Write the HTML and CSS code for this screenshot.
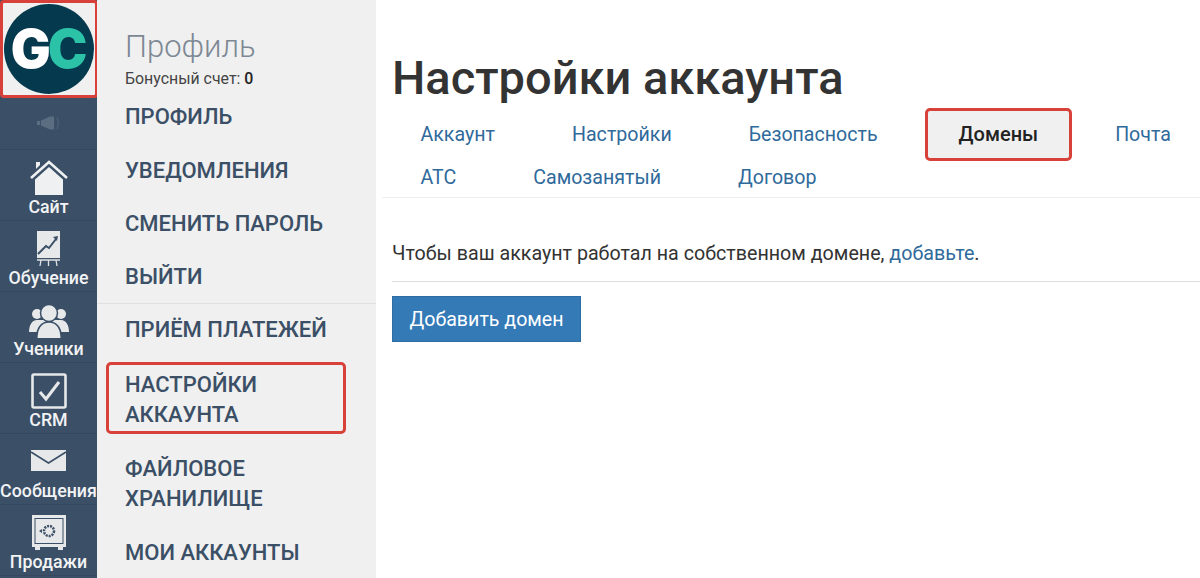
FILE: index.html
```html
<!DOCTYPE html>
<html lang="ru">
<head>
<meta charset="utf-8">
<title>Настройки аккаунта</title>
<link rel="stylesheet" href="styles.css">
</head>
<body>
<div class="app">
  <nav class="rail">
    <a class="logo-cell">
      <span class="logo"><span class="logo-g">G</span><span class="logo-c">C</span></span>
    </a>
    <div class="speaker">
      <svg width="26" height="18" viewBox="0 0 26 18"><path fill="#5b6d81" d="M1 7h3v4H1zM5 6.500 14 2.500h4v13h-4L5 11.500z"/><path fill="none" stroke="#4d5f74" stroke-width="1.500" d="M21 3c1.500 3.500 1.500 8.500 0 12"/></svg>
    </div>
    <a class="rail-item">
      <svg class="ico" width="38" height="36" viewBox="0 0 38 36"><path fill="#eef0f2" d="M6 2h4v3L6 9z"/><path fill="none" stroke="#eef0f2" stroke-width="2.600" d="M1 18 19 2l18 16"/><path fill="#eef0f2" d="M19 7 33 19.500V35H5V19.500z"/></svg>
      <span>Сайт</span>
    </a>
    <a class="rail-item">
      <svg class="ico" width="24" height="36" viewBox="0 0 24 36"><path fill="#e6e8ea" d="M0 0h23v27H0z"/><path fill="none" stroke="#3b4f66" stroke-width="2" d="m1 23 8-8 3 2 7-9"/><path fill="#3b4f66" d="m21 5-5 1 4 4z"/><path fill="none" stroke="#dfe2e5" stroke-width="1.300" d="M0 29h23M3 35l1-6M11.500 35v-6M20 35l-1-6"/></svg>
      <span>Обучение</span>
    </a>
    <a class="rail-item">
      <svg class="ico" width="40" height="34" viewBox="0 0 40 34"><g fill="#e6e8ea"><circle cx="8" cy="10" r="5"/><circle cx="32" cy="10" r="5"/><path d="M0 28c0-7 3-12 8-12h24c5 0 8 5 8 12z"/><g stroke="#3b4f66" stroke-width="1.500"><circle cx="20" cy="9" r="8.500"/><path d="M8 35c-1-10 4-17 12-17s13 7 12 17z"/></g></g></svg>
      <span>Ученики</span>
    </a>
    <a class="rail-item">
      <svg class="ico crm" width="36" height="36" viewBox="0 0 36 36"><rect x="1.500" y="1.500" width="33" height="33" rx="1.500" fill="none" stroke="#e6e8ea" stroke-width="2.600"/><path fill="none" stroke="#e6e8ea" stroke-width="3" d="m9 19 6 7 13-17"/></svg>
      <span>CRM</span>
    </a>
    <a class="rail-item">
      <svg class="ico mail" width="35" height="21" viewBox="0 0 35 21"><rect width="35" height="21" fill="#e6e8ea"/><path fill="none" stroke="#3b4f66" stroke-width="1.600" d="m0 2 17.500 11L35 2"/></svg>
      <span>Сообщения</span>
    </a>
    <a class="rail-item">
      <svg class="ico safe" width="36" height="36" viewBox="0 0 36 36"><path fill="#e6e8ea" d="M1 0h34v32h-3v3h-5v-3H9v3H4v-3H1z"/><rect x="4" y="3.500" width="28" height="25" fill="none" stroke="#3b4f66" stroke-width="1"/><circle cx="18" cy="16" r="5" fill="none" stroke="#3b4f66" stroke-width="2.500" stroke-dasharray="2 1"/><path fill="#3b4f66" d="m8 16 3-2v4z"/></svg>
      <span>Продажи</span>
    </a>
  </nav>

  <aside class="panel">
    <header class="panel-head">
      <h2 class="panel-title">Профиль</h2>
      <p class="bonus">Бонусный счет: <b>0</b></p>
    </header>
    <ul class="menu">
      <li class="menu-first"><a>ПРОФИЛЬ</a></li>
      <li><a>УВЕДОМЛЕНИЯ</a></li>
      <li><a>СМЕНИТЬ ПАРОЛЬ</a></li>
      <li class="menu-last"><a>ВЫЙТИ</a></li>
      <li class="menu-pay"><a>ПРИЁМ ПЛАТЕЖЕЙ</a></li>
      <li class="menu-tall menu-marked"><a>НАСТРОЙКИ АККАУНТА</a></li>
      <li class="menu-tall menu-files"><a>ФАЙЛОВОЕ ХРАНИЛИЩЕ</a></li>
      <li><a>МОИ АККАУНТЫ</a></li>
    </ul>
  </aside>

  <main class="main">
    <h1 class="title">Настройки аккаунта</h1>
    <ul class="tabs">
      <li><a>Аккаунт</a></li>
      <li><a>Настройки</a></li>
      <li><a>Безопасность</a></li>
      <li class="tab-active"><a>Домены</a></li>
      <li><a>Почта</a></li>
      <li><a>АТС</a></li>
      <li><a>Самозанятый</a></li>
      <li><a>Договор</a></li>
    </ul>
    <p class="note">Чтобы ваш аккаунт работал на собственном домене, <a>добавьте</a>.</p>
    <hr class="rule">
    <button class="btn" type="button">Добавить домен</button>
  </main>
</div>
</body>
</html>
```
FILE: styles.css
```css
* { box-sizing: border-box; }
html, body { margin: 0; padding: 0; height: 100%; overflow: hidden; background: #fff; }
body { font-family: Roboto, "Noto Sans", sans-serif; }
ul { list-style: none; margin: 0; padding: 0; }

.app { display: flex; height: 578px; overflow: hidden; }

/* Left rail */
.rail { width: 97px; flex: none; background: #3b4f66; display: flex; flex-direction: column; overflow: hidden; }
.logo-cell { flex: none; height: 98px; background: #f0f0f0; border: 3px solid #d8413a; border-radius: 4px; display: flex; align-items: center; justify-content: center; width: 98px; }
.logo { width: 90px; height: 90px; border-radius: 50%; background: #053a4e; display: flex; align-items: center; justify-content: center; font-family: Inter, sans-serif; font-weight: 900; font-size: 53px; letter-spacing: -3px; line-height: 1; padding-right: 3px; }
.logo-g { color: #fff; }
.logo-c { color: #2cc2a8; }
.speaker { height: 52px; flex: none; display: flex; align-items: center; justify-content: center; border-bottom: 1px solid #35485e; padding-bottom: 1px; }
.rail-item { height: 71px; flex: none; display: flex; flex-direction: column; align-items: center; justify-content: flex-end; padding-bottom: 3px; border-bottom: 1px solid #35485e; color: #f2f3f5; font-size: 17.800px; font-weight: 500; line-height: 20px; white-space: nowrap; }
.rail-item .ico { flex: none; margin-bottom: 1px; }
.rail-item .mail { margin-bottom: 10px; }

/* Second panel */
.panel { width: 279px; flex: none; background: #f0f0f0; }
.panel-head { padding: 28px 0 0 28px; }
.panel-title { margin: 0; font-size: 31px; line-height: 38px; font-weight: 300; color: #7d8894; }
.bonus { margin: 4px 0 0; font-size: 15.900px; line-height: 18px; color: #444; font-weight: 400; }
.bonus b { font-weight: 500; color: #222; }
.menu { margin-top: 4px; }
.menu li { padding: 11px 28px 12px; font-size: 22px; line-height: 30px; font-weight: 500; color: #3b4f66; }
.menu .menu-first { padding-top: 10px; padding-bottom: 13px; }
.menu .menu-last { border-bottom: 1px solid #e0e0e0; padding-bottom: 11px; }
.menu .menu-pay { padding-bottom: 13px; }
.menu .menu-tall { padding-top: 12px; padding-bottom: 12px; }
.menu .menu-files { padding-bottom: 13px; }
.menu .menu-marked { position: relative; }
.menu .menu-marked::before { content: ""; position: absolute; left: 9px; right: 30px; top: 4px; bottom: 8px; border: 3px solid #d8413a; border-radius: 5px; }

/* Main content */
.main { flex: 1; min-width: 0; padding: 47px 0 0 16px; }
.title { margin: 0; font-size: 47px; line-height: 61px; font-weight: 500; color: #333; white-space: nowrap; }
.tabs { display: flex; flex-wrap: wrap; margin: 0 -20px 0 -10px; padding-bottom: 3px; border-bottom: 1px solid #eee; }
.tabs li { padding: 16px 38.500px 6px; font-size: 19.600px; line-height: 21px; color: #2f6a9b; height: 43px; white-space: nowrap; }
.tabs .tab-active { background: #f0f0f0; border: 3px solid #d8413a; border-radius: 5px; color: #222; font-size: 20px; font-weight: 500; padding: 0 31px; height: 53px; margin: 0 4.500px -10px 8.500px; display: flex; align-items: center; }
.note { margin: 45px 0 0; font-size: 19.660px; line-height: 21px; color: #333; }
.note a { color: #2f6a9b; }
.rule { margin: 17px 0 14px; border: 0; border-top: 1px solid #ddd; }
.btn { display: block; width: 189px; height: 46px; padding: 0; background: #337ab7; border: 1px solid #2e6da4; color: #fff; font: 400 19.600px Roboto, sans-serif; }
```
